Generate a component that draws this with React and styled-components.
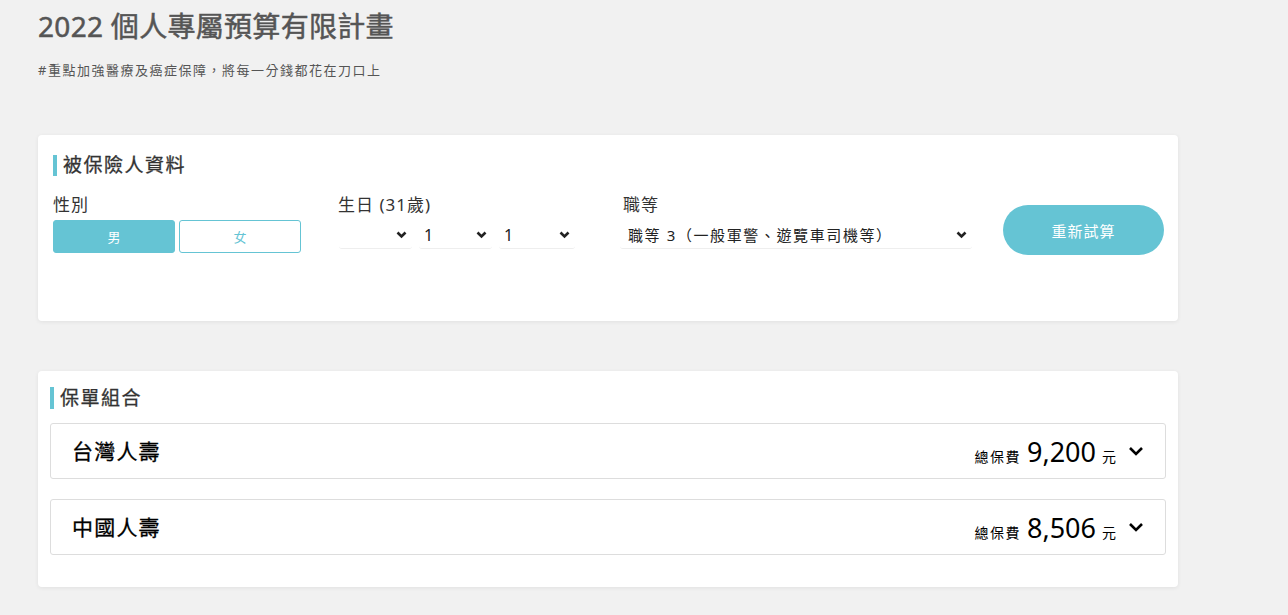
import React from 'react'
import styled, { createGlobalStyle } from 'styled-components'

const teal = '#65c4d4'

const GlobalStyle = createGlobalStyle`
  body {
    margin: 0;
    background: #f1f1f1;
    font-family: "Noto Sans", "Noto Sans CJK TC", sans-serif;
    color: #333;
  }
`

const Page = styled.div`
  padding: 6px 38px 30px;
  width: 1140px;
`

const Title = styled.h1`
  margin: 0;
  font-size: 28px;
  line-height: 40px;
  font-weight: 400;
  color: #555;
  letter-spacing: 0.3px;
  -webkit-text-stroke: 0.5px #555;
`

const Subtitle = styled.p`
  margin: 14px 0 0;
  font-size: 13px;
  line-height: 20px;
  letter-spacing: 1.5px;
  color: #555;
`

const Card = styled.section`
  background: #fff;
  border-radius: 4px;
  box-shadow: 0 1px 4px rgba(0, 0, 0, 0.07);
  margin-top: ${p => p.$top}px;
  padding: ${p => p.$padding};
`

const SectionTitle = styled.h2`
  margin: 0;
  border-left: 4px solid ${teal};
  padding-left: 6px;
  font-size: 19px;
  line-height: ${p => p.$h}px;
  font-weight: 400;
  color: #333;
  letter-spacing: 1.5px;
  -webkit-text-stroke: 0.3px #333;
`

const FormRow = styled.div`
  display: grid;
  grid-template-columns: 285px 285px 380px 160px;
  margin-top: 17px;
`

const Field = styled.div`
  display: flex;
  flex-direction: column;
`

const Label = styled.label`
  font-size: 17px;
  line-height: 24px;
  letter-spacing: 1px;
  color: #333;
`

const GenderGroup = styled.div`
  display: flex;
  gap: 4px;
  margin-top: 3px;
`

const GenderButton = styled.button`
  width: 122px;
  height: 33px;
  border-radius: 3px;
  border: 1px solid ${teal};
  background: ${p => (p.$active ? teal : '#fff')};
  color: ${p => (p.$active ? '#fff' : teal)};
  font-family: inherit;
  font-size: 13px;
  cursor: pointer;
`

const SelectGroup = styled.div`
  display: flex;
  gap: 7px;
  margin-top: 5px;
`

const SelectWrap = styled.div`
  position: relative;
  width: ${p => p.$w}px;
  margin-left: ${p => p.$ml || 0}px;
`

const Select = styled.select`
  appearance: none;
  width: 100%;
  height: 27px;
  border: none;
  border-bottom: 1px solid #eee;
  border-radius: 3px;
  background: #fff;
  font-family: inherit;
  font-size: ${p => p.$fs || 16}px;
  letter-spacing: ${p => p.$ls || 0}px;
  color: #222;
  padding: 0 20px 0 ${p => p.$pl || 5}px;
  outline: none;
`

const Caret = styled.svg`
  position: absolute;
  right: 5px;
  top: 9px;
  pointer-events: none;
`

const ActionCol = styled.div`
  padding-top: 12px;
`

const RetryButton = styled.button`
  width: 161px;
  height: 50px;
  border: none;
  border-radius: 25px;
  background: ${teal};
  color: #fff;
  font-family: inherit;
  font-size: 15px;
  letter-spacing: 1px;
  cursor: pointer;
`

const PlanList = styled.div`
  display: flex;
  flex-direction: column;
  gap: 20px;
  margin-top: 14px;
`

const Plan = styled.div`
  height: 56px;
  box-sizing: border-box;
  border: 1px solid #ddd;
  border-radius: 3px;
  display: flex;
  align-items: center;
  justify-content: space-between;
  padding: 0 21px;
`

const PlanName = styled.div`
  font-size: 21px;
  letter-spacing: 1.2px;
  color: #000;
  font-weight: 400;
  margin-top: -3px;
  -webkit-text-stroke: 0.3px #000;
`

const Price = styled.div`
  display: flex;
  align-items: baseline;
  color: #000;
`

const PriceLabel = styled.span`
  font-size: 14px;
  letter-spacing: 1.5px;
`

const PriceValue = styled.span`
  font-size: 27px;
  margin: 0 6px 0 6px;
  font-weight: 400;
`

const Unit = styled.span`
  font-size: 14px;
`

const PlanCaret = styled.svg`
  margin-left: 12px;
  align-self: center;
`

const SmallCaret = () => (
  <Caret width="11" height="8" viewBox="0 0 11 8">
    <polyline points="1.5,1.5 5.5,5.5 9.5,1.5" fill="none" stroke="#222" strokeWidth="2.6" />
  </Caret>
)

const plans = [
  { name: '台灣人壽', total: '9,200' },
  { name: '中國人壽', total: '8,506' }
]

export default function App() {
  return (
    <Page>
      <GlobalStyle />
      <Title>2022 個人專屬預算有限計畫</Title>
      <Subtitle>#重點加強醫療及癌症保障，將每一分錢都花在刀口上</Subtitle>

      <Card $top={55} $padding="20px 15px 66px">
        <SectionTitle $h={21}>被保險人資料</SectionTitle>
        <FormRow>
          <Field>
            <Label>性別</Label>
            <GenderGroup>
              <GenderButton $active>男</GenderButton>
              <GenderButton>女</GenderButton>
            </GenderGroup>
          </Field>
          <Field>
            <Label>生日 (31歲)</Label>
            <SelectGroup>
              <SelectWrap $w={73} $ml={1}>
                <Select defaultValue="">
                  <option value=""></option>
                </Select>
                <SmallCaret />
              </SelectWrap>
              <SelectWrap $w={73}>
                <Select defaultValue="1">
                  <option value="1">1</option>
                </Select>
                <SmallCaret />
              </SelectWrap>
              <SelectWrap $w={76}>
                <Select defaultValue="1">
                  <option value="1">1</option>
                </Select>
                <SmallCaret />
              </SelectWrap>
            </SelectGroup>
          </Field>
          <Field>
            <Label>職等</Label>
            <SelectGroup>
              <SelectWrap $w={352} $ml={-3}>
                <Select defaultValue="3" $fs={15} $ls={1.6} $pl={8}>
                  <option value="3">職等 3（一般軍警、遊覽車司機等）</option>
                </Select>
                <SmallCaret />
              </SelectWrap>
            </SelectGroup>
          </Field>
          <ActionCol>
            <RetryButton>重新試算</RetryButton>
          </ActionCol>
        </FormRow>
      </Card>

      <Card $top={50} $padding="16px 12px 32px">
        <SectionTitle $h={22}>保單組合</SectionTitle>
        <PlanList>
          {plans.map(p => (
            <Plan key={p.name}>
              <PlanName>{p.name}</PlanName>
              <Price>
                <PriceLabel>總保費</PriceLabel>
                <PriceValue>{p.total}</PriceValue>
                <Unit>元</Unit>
                <PlanCaret width="16" height="10" viewBox="0 0 16 10">
                  <polyline points="2,2 8,8 14,2" fill="none" stroke="#000" strokeWidth="2.6" />
                </PlanCaret>
              </Price>
            </Plan>
          ))}
        </PlanList>
      </Card>
    </Page>
  )
}
